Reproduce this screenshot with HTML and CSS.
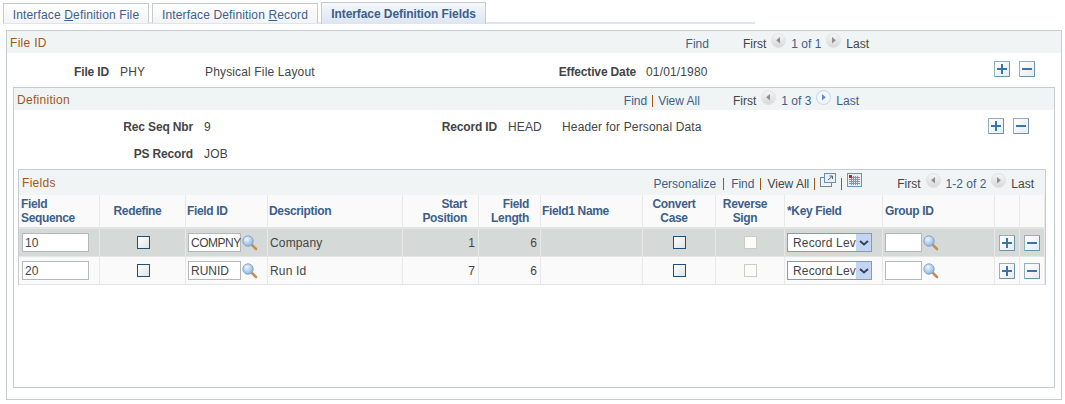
FILE: index.html
```html
<!DOCTYPE html>
<html lang="en">
<head>
<meta charset="utf-8">
<title>Interface Definition Fields</title>
<link rel="stylesheet" href="styles.css">
</head>
<body>
<svg class="defs" width="0" height="0" aria-hidden="true">
  <defs>
    <linearGradient id="btnfill" x1="0" y1="0" x2="1" y2="1"><stop offset="0" stop-color="#ffffff"/><stop offset="1" stop-color="#e6ebef"/></linearGradient>
    <linearGradient id="roundfill" x1="0" y1="0" x2="0" y2="1"><stop offset="0" stop-color="#f6f6f6"/><stop offset="1" stop-color="#d6d8d8"/></linearGradient>
    <radialGradient id="lens" cx="0.4" cy="0.35" r="0.7"><stop offset="0" stop-color="#f0f7fd"/><stop offset="1" stop-color="#7fb0e2"/></radialGradient>
    <symbol id="plus" viewBox="0 0 16 16"><rect x=".5" y=".5" width="15" height="15" fill="url(#btnfill)" stroke="#8fb0bf"/><path d="M15.5 1v14.5H1" fill="none" stroke="#6a93a8"/><path d="M3 8h10M8 3v10" stroke="#3b74ad" stroke-width="2"/></symbol>
    <symbol id="minus" viewBox="0 0 16 16"><rect x=".5" y=".5" width="15" height="15" fill="url(#btnfill)" stroke="#8fb0bf"/><path d="M15.5 1v14.5H1" fill="none" stroke="#6a93a8"/><path d="M3 8h10" stroke="#3b74ad" stroke-width="2"/></symbol>
    <symbol id="prev" viewBox="0 0 15 15"><circle cx="7.5" cy="7.5" r="7" fill="url(#roundfill)" stroke="#e0e3e6"/><path d="M9 4v6.5L5.2 7.2z" fill="#8b8f91"/></symbol>
    <symbol id="next" viewBox="0 0 15 15"><circle cx="7.5" cy="7.5" r="7" fill="url(#roundfill)" stroke="#e0e3e6"/><path d="M6 4v6.5l3.8-3.3z" fill="#8b8f91"/></symbol>
    <symbol id="next-on" viewBox="0 0 15 15"><circle cx="7.5" cy="7.5" r="7" fill="#f2f6fb" stroke="#c3d4e8"/><path d="M6 4v6.5l3.8-3.3z" fill="#5d8fc6"/></symbol>
    <symbol id="lookup" viewBox="0 0 16 16"><path d="M9.5 9.5l4.5 4.5" stroke="#c98d52" stroke-width="2.6" stroke-linecap="round"/><circle cx="6" cy="6" r="5.2" fill="url(#lens)" stroke="#8aa6c4"/></symbol>
    <symbol id="newwin" viewBox="0 0 16 15"><rect x=".5" y="4.5" width="11" height="9" fill="none" stroke="#77838c"/><rect x="4.5" y=".5" width="11" height="9" fill="#e9eff6" stroke="#6d8fb5"/><path d="M8 7l4-3.5M9.5 3h3v3" fill="none" stroke="#56626b"/></symbol>
    <symbol id="grid" viewBox="0 0 15 14"><rect x=".5" y=".5" width="14" height="13" fill="#e8edf4" stroke="#6d93c6"/><path d="M2 4.5h11M2 6.5h11M2 8.5h11M2 10.5h11M4.5 3v9M6.5 3v9M8.5 3v9M10.5 3v9" stroke="#8d959c"/><rect x="2" y="2" width="3" height="3" fill="#e8141c"/></symbol>
  </defs>
</svg>

<nav class="tabs">
  <a class="tab tab-1">Interface <u>D</u>efinition File</a>
  <a class="tab tab-2">Interface Definition <u>R</u>ecord</a>
  <a class="tab tab-active">Interface Definition Fields</a>
</nav>

<section class="box box-outer">
  <header class="band">
    <h2 class="title">File ID</h2>
    <div class="pager pager-file">
      <a class="link find-file">Find</a>
      <span>First</span>
      <svg class="round"><use href="#prev"/></svg>
      <a class="link">1 of 1</a>
      <svg class="round"><use href="#next"/></svg>
      <span>Last</span>
    </div>
  </header>
  <div class="row row-file">
    <b class="lbl lbl-file">File ID</b>
    <span class="val val-phy">PHY</span>
    <span class="val val-layout">Physical File Layout</span>
    <b class="lbl lbl-eff">Effective Date</b>
    <span class="val">01/01/1980</span>
    <span class="addrem addrem-file">
      <svg class="btn"><use href="#plus"/></svg>
      <svg class="btn"><use href="#minus"/></svg>
    </span>
  </div>

  <section class="box box-def">
    <header class="band">
      <h2 class="title">Definition</h2>
      <div class="pager pager-def">
        <a class="link">Find</a><i class="sep"></i><a class="link">View All</a>
        <span class="first-def">First</span>
        <svg class="round"><use href="#prev"/></svg>
        <a class="link">1 of 3</a>
        <svg class="round"><use href="#next-on"/></svg>
        <a class="link">Last</a>
      </div>
    </header>
    <div class="row row-rec">
      <b class="lbl lbl-rec">Rec Seq Nbr</b>
      <span class="val val-nine">9</span>
      <b class="lbl lbl-recid">Record ID</b>
      <span class="val val-head">HEAD</span>
      <span class="val">Header for Personal Data</span>
      <span class="addrem addrem-def">
        <svg class="btn"><use href="#plus"/></svg>
        <svg class="btn"><use href="#minus"/></svg>
      </span>
    </div>
    <div class="row row-ps">
      <b class="lbl lbl-rec">PS Record</b>
      <span class="val">JOB</span>
    </div>

    <section class="box box-grid">
      <header class="band band-grid">
        <h2 class="title">Fields</h2>
        <div class="pager pager-grid">
          <a class="link">Personalize</a><i class="sep sep-wide"></i><a class="link">Find</a><i class="sep sep-mid"></i><span>View All</span><i class="sep"></i>
          <svg class="ico-new"><use href="#newwin"/></svg><i class="sep"></i>
          <svg class="ico-grid"><use href="#grid"/></svg>
          <span class="first-grid">First</span>
          <svg class="round"><use href="#prev"/></svg>
          <a class="link">1-2 of 2</a>
          <svg class="round"><use href="#next"/></svg>
          <span>Last</span>
        </div>
      </header>
      <table class="grid">
        <colgroup>
          <col class="c1"><col class="c2"><col class="c3"><col class="c4"><col class="c5"><col class="c6"><col class="c7"><col class="c8"><col class="c9"><col class="c10"><col class="c11"><col class="c12"><col class="c13">
        </colgroup>
        <thead>
          <tr>
            <th class="wide">Field<br>Sequence</th>
            <th class="ctr">Redefine</th>
            <th>Field ID</th>
            <th>Description</th>
            <th class="rgt">Start<br>Position</th>
            <th class="rgt">Field<br>Length</th>
            <th>Field1 Name</th>
            <th class="ctr">Convert<br>Case</th>
            <th class="ctr">Reverse<br>Sign</th>
            <th class="wide">*Key Field</th>
            <th class="wide">Group ID</th>
            <th></th>
            <th></th>
          </tr>
        </thead>
        <tbody>
          <tr class="odd">
            <td><span class="input input-seq">10</span></td>
            <td class="ctr"><span class="check check-shift"></span></td>
            <td class="tight"><span class="lookup"><span class="input input-id input-long">COMPNY</span><svg class="mag"><use href="#lookup"/></svg></span></td>
            <td class="desc">Company</td>
            <td class="num">1</td>
            <td class="num">6</td>
            <td></td>
            <td class="ctr"><span class="check"></span></td>
            <td class="ctr"><span class="check check-off"></span></td>
            <td class="tight"><span class="select">Record Lev<span class="arrow"><svg width="10" height="6" viewBox="0 0 10 6"><path d="M1 1l4 3.5L9 1" fill="none" stroke="#34445e" stroke-width="2"/></svg></span></span></td>
            <td class="tight"><span class="lookup"><span class="input input-grp"></span><svg class="mag"><use href="#lookup"/></svg></span></td>
            <td class="ctr"><svg class="btn"><use href="#plus"/></svg></td>
            <td class="ctr"><svg class="btn"><use href="#minus"/></svg></td>
          </tr>
          <tr class="even">
            <td><span class="input input-seq">20</span></td>
            <td class="ctr"><span class="check check-shift"></span></td>
            <td class="tight"><span class="lookup"><span class="input input-id">RUNID</span><svg class="mag"><use href="#lookup"/></svg></span></td>
            <td class="desc">Run Id</td>
            <td class="num">7</td>
            <td class="num">6</td>
            <td></td>
            <td class="ctr"><span class="check"></span></td>
            <td class="ctr"><span class="check check-off"></span></td>
            <td class="tight"><span class="select">Record Lev<span class="arrow"><svg width="10" height="6" viewBox="0 0 10 6"><path d="M1 1l4 3.5L9 1" fill="none" stroke="#34445e" stroke-width="2"/></svg></span></span></td>
            <td class="tight"><span class="lookup"><span class="input input-grp"></span><svg class="mag"><use href="#lookup"/></svg></span></td>
            <td class="ctr"><svg class="btn"><use href="#plus"/></svg></td>
            <td class="ctr"><svg class="btn"><use href="#minus"/></svg></td>
          </tr>
        </tbody>
      </table>
    </section>
  </section>
</section>
</body>
</html>
```
FILE: styles.css
```css
* { box-sizing: border-box; }
html, body { margin: 0; background: #fff; }
body {
  width: 1065px;
  height: 404px;
  overflow: hidden;
  padding: 2px 4px 0 6px;
  font: 12px/14px "Liberation Sans", Arial, sans-serif;
  letter-spacing: .15px;
  color: #444;
}
.defs { position: absolute; }
svg { display: block; flex: none; }
a { color: #3d5f8a; }
b { letter-spacing: -.15px; }
h2 { margin: 0; font-weight: normal; }

.tabs {
  display: flex;
  gap: 3px;
  width: 752px;
  margin-left: -3px;
  height: 22px;
  border-bottom: 2px solid #dce6f2;
}
.tab {
  height: 20px;
  margin-top: 1px;
  padding-top: 4px;
  text-align: center;
  border: 1px solid #c6cbd0;
  border-bottom: 0;
  background: linear-gradient(#fff, #f3f3f3);
  color: #3d5f8a;
}
.tab-1 { width: 146px; }
.tab-2 { width: 166px; }
.tab-active {
  width: 165px;
  height: 22px;
  margin-top: 0;
  font-weight: bold;
  letter-spacing: -.08px;
  background: linear-gradient(#f4f7fb, #dce6f2);
}

.box-outer {
  width: 1056px;
  height: 370px;
  margin-top: 6px;
  border: 1px solid #c6cbd0;
}
.band {
  display: flex;
  align-items: center;
  height: 22px;
  background: #f0f4f5;
  padding-left: 3px;
}
.title { margin-top: 2px; font-size: 12px; letter-spacing: .3px; color: #a4551a; }
.pager { display: flex; align-items: center; margin-left: auto; padding-top: 4px; letter-spacing: 0; }
.pager-file { padding-right: 192px; }
.find-file { margin-right: 34px; }
.pager-def { padding-right: 195px; }
.pager-grid { padding-top: 2px; padding-right: 11px; }
.round { width: 15px; height: 15px; margin: -7px 5px 0 5px; }
.first-def { margin-left: 33px; }
.first-grid { margin-left: 35px; }
.sep { display: block; width: 1px; height: 12px; margin: 0 5px; background: #a4551a; }
.sep-wide { margin: 0 7px; }
.sep-mid { margin: 0 6px; }
.ico-new { width: 16px; height: 15px; margin-top: -7px; }
.ico-grid { width: 15px; height: 14px; margin-top: -8px; }

.row { display: flex; align-items: center; }
.lbl { display: block; text-align: right; }
.val { display: block; }
.row-file { height: 34px; padding-top: 4px; }
.lbl-file { width: 102px; margin-right: 11px; }
.val-phy { width: 85px; }
.val-layout { width: 325px; }
.lbl-eff { width: 106px; margin-right: 10px; }
.addrem { display: flex; gap: 9px; margin-left: auto; }
.addrem-file { padding-right: 26px; margin-top: -7px; }
.addrem-def { padding-right: 25px; margin-top: -2px; }
.btn { width: 16px; height: 16px; }

.box-def {
  width: 1042px;
  height: 301px;
  margin-left: 6px;
  border: 1px solid #c6cbd0;
}
.row-rec { height: 34px; }
.row-ps { height: 20px; }
.lbl-rec { width: 179px; margin-right: 11px; }
.val-nine { width: 179px; }
.lbl-recid { width: 114px; margin-right: 11px; }
.val-head { width: 54px; }

.box-grid {
  width: 1028px;
  margin: 5px 0 0 4px;
  border: 1px solid #c6cbd0;
  border-bottom: 0;
}
.band-grid { height: 25px; }
.band-grid .title { margin-top: 0; }

.grid {
  table-layout: fixed;
  width: 1026px;
  border-collapse: separate;
  border-spacing: 0;
}
.c1 { width: 81px; } .c2 { width: 86px; } .c3 { width: 82px; } .c4 { width: 135px; }
.c5 { width: 76px; } .c6 { width: 62px; } .c7 { width: 102px; } .c8 { width: 73px; }
.c9 { width: 69px; } .c10 { width: 98px; } .c11 { width: 112px; } .c12 { width: 25px; }
.c13 { width: 25px; }
.grid th {
  height: 34px;
  padding: 0 2px 1px 1px;
  font-weight: bold;
  letter-spacing: -.35px;
  text-align: left;
  color: #3d5f8a;
  background: #fafafa;
  border-right: 1px solid #e8e8e8;
  border-bottom: 2px solid #e2e4e4;
}
.grid th.wide { padding-left: 2px; }
.grid td {
  height: 28px;
  padding: 0 3px;
  border-right: 1px solid #e8e8e8;
  border-bottom: 1px solid #e4e6e6;
}
.grid td.tight { padding-left: 2px; }
.grid .ctr { text-align: center; }
.grid th.ctr { padding-right: 11px; }
.grid th.rgt { text-align: right; padding-right: 11px; }
.grid .num { text-align: right; }
.grid td.desc { padding-left: 2px; }
.odd td { background: #d5dad8; }
.even td { background: #fafafa; }
.grid td.ctr svg { margin: 0 auto; }

.input {
  display: block;
  height: 19px;
  padding: 2px 0 0 2px;
  background: #fff;
  border: 1px solid #b5b8b8;
  white-space: nowrap;
  letter-spacing: 0;
}
.input-seq { width: 67px; }
.input-id { width: 53px; }
.input-long { letter-spacing: -.5px; }
.input-grp { width: 37px; }
.lookup { display: flex; align-items: center; }
.mag { width: 16px; height: 16px; margin-left: 1px; }
.check {
  display: block;
  width: 13px;
  height: 13px;
  margin: 0 auto;
  background: linear-gradient(135deg, #fff, #e0e3e2);
  border: 1px solid #1f4f7f;
}
.check-shift { position: relative; left: 1px; }
.check-off { background: #fbfbfb; border-color: #c9cdc6; }
.select {
  display: flex;
  align-items: center;
  justify-content: space-between;
  width: 85px;
  height: 19px;
  padding-left: 5px;
  background: #fff;
  border: 1px solid #7f9db9;
  white-space: nowrap;
}
.arrow {
  display: flex;
  align-items: center;
  justify-content: center;
  width: 15px;
  height: 17px;
  flex: none;
  background: #c3d5f2;
}
```
